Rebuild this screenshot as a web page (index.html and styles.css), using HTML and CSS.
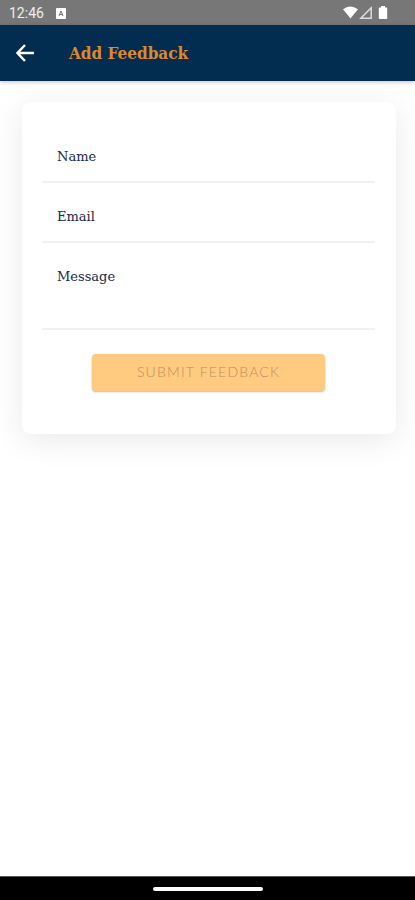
FILE: index.html
```html
<!DOCTYPE html>
<html lang="en">
<head>
  <meta charset="utf-8">
  <meta name="viewport" content="width=device-width, initial-scale=1">
  <title>Add Feedback</title>
  <link rel="stylesheet" href="styles.css">
</head>
<body>
  <div class="status-bar">
    <span class="time">12:46</span>
    <svg class="status-app" width="10" height="11" viewBox="0 0 10 11">
      <rect width="10" height="11" rx="1" fill="#fff"/>
      <path d="M3 8 5 3l2 5M3.700 6.500h2.600" fill="none" stroke="#777" stroke-width="1"/>
    </svg>
    <svg class="status-icons" width="46" height="14" viewBox="0 0 46 14">
      <path d="M1 3.200Q8-2 16 3.200L8.500 12.500z" fill="#fff"/>
      <path d="M29.200 1.800v10.400H18.800z" fill="none" stroke="#ddd" stroke-width="1.500"/>
      <path d="M37.500 1.500h1.500V0h4v1.500h1.500q.7 0 .7.700v10q0 .8-.8.800h-6.800q-.8 0-.8-.800v-10q0-.7.700-.7z" fill="#fff"/>
    </svg>
  </div>

  <header class="toolbar">
    <button class="back" aria-label="Back">
      <svg width="18" height="18" viewBox="0 0 18 18">
        <path d="M9 1 1.500 9 9 17M1.500 9H18" fill="none" stroke="#fff" stroke-width="2.400"/>
      </svg>
    </button>
    <h1>Add Feedback</h1>
  </header>

  <main>
    <form class="card">
      <label class="field">
        <span>Name</span>
        <input type="text" name="name">
      </label>
      <label class="field">
        <span>Email</span>
        <input type="email" name="email">
      </label>
      <label class="field field-message">
        <span>Message</span>
        <textarea name="message"></textarea>
      </label>
      <button class="submit" type="submit" disabled>SUBMIT FEEDBACK</button>
    </form>
  </main>

  <div class="nav-bar"><div class="handle"></div></div>
</body>
</html>
```

FILE: styles.css
```css
* {
  box-sizing: border-box;
}

body {
  display: flex;
  flex-direction: column;
  height: 100vh;
  margin: 0;
  overflow: hidden;
  background: #fff;
}

.status-bar {
  display: flex;
  align-items: center;
  flex: none;
  height: 25px;
  padding: 1px 27px 0 9px;
  background: #777;
  color: #eee;
  font: 14px Roboto, sans-serif;
}

.status-app {
  margin-left: 12px;
}

.status-icons {
  margin-left: auto;
}

.toolbar {
  display: flex;
  align-items: center;
  flex: none;
  height: 56px;
  padding-left: 16px;
  background: #022d50;
  box-shadow: 0 1px 4px rgba(0, 0, 0, 0.25);
}

.back {
  width: 18px;
  height: 18px;
  margin: 0 35px 0 0;
  padding: 0;
  border: 0;
  background: none;
}

.back svg {
  display: block;
}

.toolbar h1 {
  margin: 0;
  color: #dc892d;
  font: bold 17px "DejaVu Serif Condensed", "DejaVu Serif", serif;
  white-space: nowrap;
}

main {
  flex: 1;
  padding: 21px 19px 0 22px;
}

.card {
  height: 332px;
  padding: 40px 21px 0 20px;
  border-radius: 9px;
  background: #fff;
  box-shadow: 0 6px 32px rgba(0, 0, 0, 0.09);
}

.field {
  display: block;
  position: relative;
  height: 60px;
  padding: 6px 16px 0 15px;
  border-bottom: 2px solid #f1f1f1;
  color: #202945;
  font: 13px/18px "DejaVu Serif", serif;
}

.field:first-child {
  height: 41px;
}

.field + .field {
  padding-top: 25px;
}

.field-message {
  height: 87px;
}

/* inputs lie over their resting labels */
.field input,
.field textarea {
  position: absolute;
  inset: 0;
  width: 100%;
  height: 100%;
  padding: 0 16px;
  border: 0;
  outline: 0;
  background: none;
  resize: none;
}

.submit {
  display: block;
  width: 233px;
  height: 37px;
  margin: 24px auto 0 50px;
  padding: 0 0 2px;
  border: 0;
  border-radius: 4px;
  background: #ffcb80;
  box-shadow: 0 1px 2px rgba(0, 0, 0, 0.28);
  color: #b8905f;
  font: 300 14px Lato, sans-serif;
  letter-spacing: 1.2px;
}

.nav-bar {
  display: flex;
  justify-content: center;
  flex: none;
  height: 24px;
  padding-top: 10px;
  border-top: 1px solid #555;
  background: #000;
}

.handle {
  width: 110px;
  height: 4px;
  border-radius: 2px;
  background: #fff;
}
```
